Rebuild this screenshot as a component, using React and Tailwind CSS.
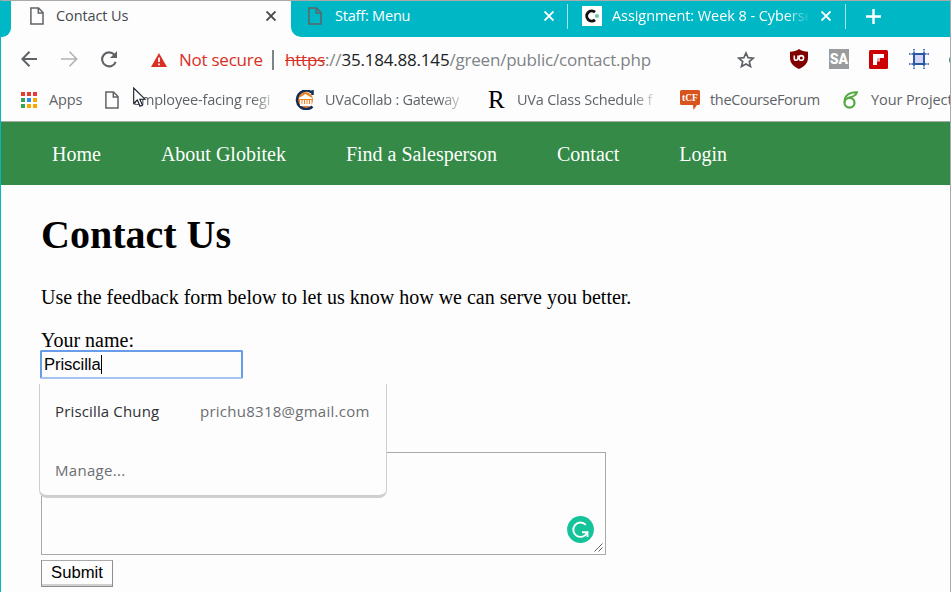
import React from "react";

const ui = "font-['Open_Sans',sans-serif]";
const fade = "[mask-image:linear-gradient(to_right,#000_84%,rgba(0,0,0,0.2))]";

function PageIcon({ className = "" }) {
  return (
    <svg width="14" height="18" viewBox="0 0 14 18" fill="none" stroke="#5f6368" strokeWidth="1.5" className={`shrink-0 ${className}`}>
      <path d="M.9.9H8.5L13 5.6V17.1H.9ZM8.3 1V6H13" />
    </svg>
  );
}

function CloseIcon({ color }) {
  return (
    <svg width="10" height="10" viewBox="0 0 10 10" stroke={color} strokeWidth="1.9" className="shrink-0">
      <path d="M.5.5 9.5 9.5M9.5.5.5 9.5" />
    </svg>
  );
}

function TabStrip() {
  return (
    <div className="flex h-[36px] text-[14.5px] leading-[30px]">
      <div className="w-[10px] shrink-0 rounded-br-[9px] bg-[#00b7c5]" />
      <div className="flex h-[30px] w-[280px] shrink-0 items-center pl-[19px] text-[#45494d]">
        <PageIcon />
        <span className="ml-[12px] w-[210px] tracking-[-0.1px]">Contact Us</span>
        <CloseIcon color="#45494d" />
      </div>
      <div className="flex flex-1 rounded-bl-[10px] bg-[#00b7c5] text-white">
        <div className="flex h-[30px] items-center">
          <PageIcon className="ml-[17px]" />
          <span className="ml-[13px] w-[209px] tracking-[-0.2px]">Staff: Menu</span>
          <CloseIcon color="#fff" />
          <div className="ml-[13px] h-[25px] w-px bg-[#a8e4e9]" />
          <div className="ml-[14px] flex h-[20px] w-[20px] items-center justify-center bg-white">
            <svg width="16" height="14" viewBox="0 0 16 14">
              <path d="M11 3.2A5 5 0 1 0 11 10.8" fill="none" stroke="#111" strokeWidth="2.9" />
              <circle cx="12.9" cy="7" r="2.1" fill="#72c5a0" />
            </svg>
          </div>
          <span className="ml-[10px] w-[196px] tracking-[-0.07px] whitespace-nowrap [mask-image:linear-gradient(to_right,#000_88%,rgba(0,0,0,0.1))]">Assignment: Week 8 - Cyberse</span>
          <span className="ml-[13px] flex"><CloseIcon color="#fff" /></span>
          <div className="ml-[14px] h-[25px] w-px bg-[#a8e4e9]" />
          <svg width="15" height="15" viewBox="0 0 15 15" stroke="#fff" strokeWidth="2.4" className="ml-[20px]">
            <path d="M7.5 0V15M0 7.5H15" />
          </svg>
        </div>
      </div>
    </div>
  );
}

function Toolbar() {
  return (
    <div className="flex h-[45px] items-center pl-[20px] text-[17px] leading-none">
      <svg width="17" height="16" viewBox="0 0 17 16" fill="none" stroke="#5f6368" strokeWidth="2" className="mb-px shrink-0">
        <path d="M16 8H1.5M8.5.8 1.3 8l7.2 7.2" />
      </svg>
      <svg width="17" height="16" viewBox="0 0 17 16" fill="none" stroke="#b0b2b4" strokeWidth="1.6" className="mb-px ml-[23px] shrink-0">
        <path d="M0 8H15.5M8.5.8 15.7 8l-7.2 7.2" />
      </svg>
      <svg width="18" height="17" viewBox="0 0 18 17" className="mb-px ml-[22px] shrink-0">
        <path d="M14.3 3.6A7 7 0 1 0 15.7 10.8" fill="none" stroke="#5f6368" strokeWidth="2.1" />
        <path d="M17 0V7H10Z" fill="#5f6368" />
      </svg>
      <svg width="16" height="14" viewBox="0 0 16 14" className="ml-[33px] shrink-0">
        <path d="M8 0 16 14H0Z" fill="#d93025" />
        <path d="M8 4.5V9M8 10.4V12.2" stroke="#fff" strokeWidth="1.7" />
      </svg>
      <span className="ml-[12px] w-[93px] shrink-0 tracking-[-0.25px] whitespace-nowrap text-[#d93025]">Not secure</span>
      <div className="h-[20px] w-[2px] shrink-0 bg-[#808488]" />
      <span className="ml-[11px] w-[452px] shrink-0 tracking-[-0.2px] whitespace-nowrap text-[#808387]">
        <span className="text-[#d93025] line-through decoration-1">https</span>://<span className="text-[#202124]">35.184.88.145</span>/green/public/contact.php
      </span>
      <svg width="18" height="18" viewBox="0 0 18 18" fill="none" stroke="#5f6368" strokeWidth="1.7" className="shrink-0">
        <path d="m9 2 2.1 4.7 5.1.5-3.9 3.4 1.2 5L9 12.9l-4.5 2.7 1.2-5L1.8 7.2l5.1-.5Z" />
      </svg>
      <svg width="18" height="20" viewBox="0 0 18 20" className="mb-px ml-[35px] shrink-0">
        <path d="M9 0C11.5 1.8 14.5 2.6 18 2.7V9C18 14 14.5 17.5 9 20 3.5 17.5 0 14 0 9V2.7C3.5 2.6 6.5 1.8 9 0Z" fill="#800000" />
        <path d="M4.3 6.5V9.5Q4.3 11.3 6 11.3T8 9.5V6.5" fill="none" stroke="#fff" strokeWidth="1.6" />
        <circle cx="11.3" cy="8.9" r="2.3" fill="none" stroke="#fff" strokeWidth="1.6" />
      </svg>
      <div className="mb-px ml-[21px] flex h-[20px] w-[20px] shrink-0 items-center justify-center bg-[#9a9b9d] font-['Roboto',sans-serif] text-[14px] font-black text-white">SA</div>
      <svg width="19" height="19" viewBox="0 0 19 19" className="mb-px ml-[20px] shrink-0">
        <rect width="19" height="19" rx="1.5" fill="#cc0000" />
        <path d="M4 4H15V8H11V11.3H8V15H4Z" fill="#fff" />
        <path d="M8 8H11V11.3H8Z" fill="#f0a8a8" />
      </svg>
      <svg width="20" height="20" viewBox="0 0 20 20" fill="none" stroke="#2a5aa7" className="mb-px ml-[21px] shrink-0">
        <rect x="5" y="5" width="10" height="10" fill="#d3d4f6" strokeWidth="2" />
        <path d="M0 5H4M16 5H20M0 15H4M16 15H20M5 0V4M15 0V4M5 16V20M15 16V20" strokeWidth="1.6" strokeDasharray="1.6 .8" />
      </svg>
      <div className="ml-[20px] h-[8px] w-[4px] shrink-0 rounded-l-full bg-[#4b8f74]" />
    </div>
  );
}

const appDots = ["#ea3b32", "#ea3b32", "#ea3b32", "#35a457", "#2b8df0", "#f9a800", "#35a457", "#f9a800", "#f9a800"];

function Bookmarks() {
  return (
    <div className="flex h-[39px] items-center pb-[4px] pl-[20px] text-[14.5px] whitespace-nowrap text-[#5f6368]">
      <div className="grid w-[16px] shrink-0 grid-cols-3 gap-[2px]">
        {appDots.map((c, i) => (
          <div key={i} className="h-[4px]" style={{ backgroundColor: c }} />
        ))}
      </div>
      <span className="ml-[12px] w-[56px] shrink-0 tracking-[-0.15px]">Apps</span>
      <PageIcon />
      <span className={`ml-[14px] w-[142px] shrink-0 tracking-[-0.17px] ${fade}`}>Employee-facing regi</span>
      <svg width="20" height="20" viewBox="0 0 20 20" className="ml-[19px] shrink-0">
        <circle cx="11" cy="10" r="8" fill="#ee8224" />
        <path d="M18.5 5V1.5L17 2A9.2 9.2 0 1 0 18.5 16.5" fill="none" stroke="#142d57" strokeWidth="2.5" />
        <path d="M5 8 11.5 4 18 8V9H5ZM6 10H17.5V16H6Z" fill="#fff" />
        <path d="M8 10V14M10.5 10V14M13 10V14M15.5 10V14" stroke="#ee8224" />
      </svg>
      <span className={`ml-[11px] w-[137px] shrink-0 tracking-[-0.27px] ${fade}`}>UVaCollab : Gateway</span>
      <span className="ml-[26px] w-[18px] shrink-0 font-['Liberation_Serif',serif] text-[25px] leading-none text-black">R</span>
      <span className={`ml-[11px] w-[137px] shrink-0 tracking-[-0.22px] ${fade}`}>UVa Class Schedule f</span>
      <svg width="20" height="20" viewBox="0 0 20 20" className="ml-[26px] shrink-0">
        <path d="M1.5 0H18.5Q20 0 20 1.5V13.5Q20 15 18.5 15H17L13.5 20 13 15H1.5Q0 15 0 13.5V1.5Q0 0 1.5 0Z" fill="#d8541c" />
        <text x="10" y="11" textAnchor="middle" fontSize="9.5" fontWeight="bold" fill="#fff" className="font-['Liberation_Serif',serif]">tCF</text>
      </svg>
      <span className="ml-[10px] w-[110px] shrink-0 tracking-[-0.33px]">theCourseForum</span>
      <svg width="15" height="18" viewBox="0 0 15 18" fill="none" stroke="#53a93f" className="ml-[23px] shrink-0">
        <ellipse cx="6.5" cy="11.8" rx="5" ry="4.9" strokeWidth="2.2" />
        <path d="M1.7 11C1 5 6 1 14 1.2 13 5 9 6 5.5 6.7" strokeWidth="1.9" />
      </svg>
      <span className="ml-[13px] w-[80px] shrink-0 tracking-[-0.1px]">Your Project</span>
    </div>
  );
}

function Suggestions() {
  return (
    <div className={`absolute top-[34px] left-[-2px] h-[114px] w-[348px] rounded-b-[8px] border-x border-b-[3px] border-[#cfcfcf] bg-[#fdfdfd] text-[15px] leading-[20px] ${ui}`}>
      <div className="flex pt-[17px] pl-[15px]">
        <span className="w-[145px] tracking-[0.15px] text-[#2e3033]">Priscilla Chung</span>
        <span className="tracking-[0.26px] text-[#6b6e72]">prichu8318@gmail.com</span>
      </div>
      <div className="pt-[39px] pl-[15px] tracking-[0.3px] text-[#6b6e72]">Manage...</div>
    </div>
  );
}

export default function App() {
  return (
    <div className="relative h-[592px] w-[951px] overflow-hidden border-t border-r border-l border-t-[#aaa] border-r-[#aaa] border-l-[#00b7c5] bg-[#fdfdfd]">
      <div className={`h-[121px] border-b border-[#a5aaa5] ${ui}`}>
        <TabStrip />
        <Toolbar />
        <Bookmarks />
      </div>
      <div className="font-['Liberation_Serif',serif] text-[20px] leading-[23px] text-black">
        <nav className="flex h-[63px] items-center gap-[60px] bg-[#348a46] pt-[2px] pl-[51px] text-white">
          <span>Home</span>
          <span>About Globitek</span>
          <span>Find a Salesperson</span>
          <span>Contact</span>
          <span>Login</span>
        </nav>
        <main className="pl-[40px]">
          <h1 className="pt-[27px] text-[40px] leading-[46px] font-bold">Contact Us</h1>
          <p className="pt-[28px]">Use the feedback form below to let us know how we can serve you better.</p>
          <p className="pt-[20px]">Your name:</p>
          <div className="relative">
            <div className="mt-[-2px] ml-[-1px] flex h-[29px] w-[203px] items-center rounded-[2px] border-2 border-[#669ce8] border-b-[#a5c5f2] pl-[2px] font-['Liberation_Sans',sans-serif] text-[16.67px] tracking-[-0.08px]">
              Priscilla
              <div className="h-[19px] w-px bg-black" />
            </div>
            <Suggestions />
          </div>
          <div className="mt-[73px] flex h-[103px] w-[565px] items-end justify-end border border-[#a9a9a9]">
            <svg width="27" height="27" viewBox="0 0 27 27" className="mb-[11px]">
              <circle cx="13.5" cy="13.5" r="13.4" fill="#15c39a" />
              <path d="M18.8 8.8A7.2 7.2 0 1 0 20 16.8M15 16.2H20.5V21" fill="none" stroke="#fff" strokeWidth="1.9" />
            </svg>
            <svg width="9" height="9" viewBox="0 0 9 9" stroke="#666" strokeWidth="1" className="mr-[2px] mb-[2px]">
              <path d="M.5 8.5 8.5.5M4.5 8.5 8.5 4.5" />
            </svg>
          </div>
          <div className="mt-[5px] flex h-[27px] w-[72px] items-center justify-center border border-[#8e8f94] border-t-[#a9a9a9] font-['Liberation_Sans',sans-serif] text-[16.67px] shadow-[inset_0_-2px_0_#d0d0d0]">
            <span className="pb-[2px]">Submit</span>
          </div>
        </main>
      </div>
      <svg width="14" height="21" viewBox="0 0 14 21" className="absolute top-[86px] left-[132px]">
        <path d="M.7 1V16.5L4.3 13 7 19.3 9.5 18.2 6.8 12.2H12Z" fill="#fff" stroke="#111827" strokeWidth="1.1" />
      </svg>
    </div>
  );
}
